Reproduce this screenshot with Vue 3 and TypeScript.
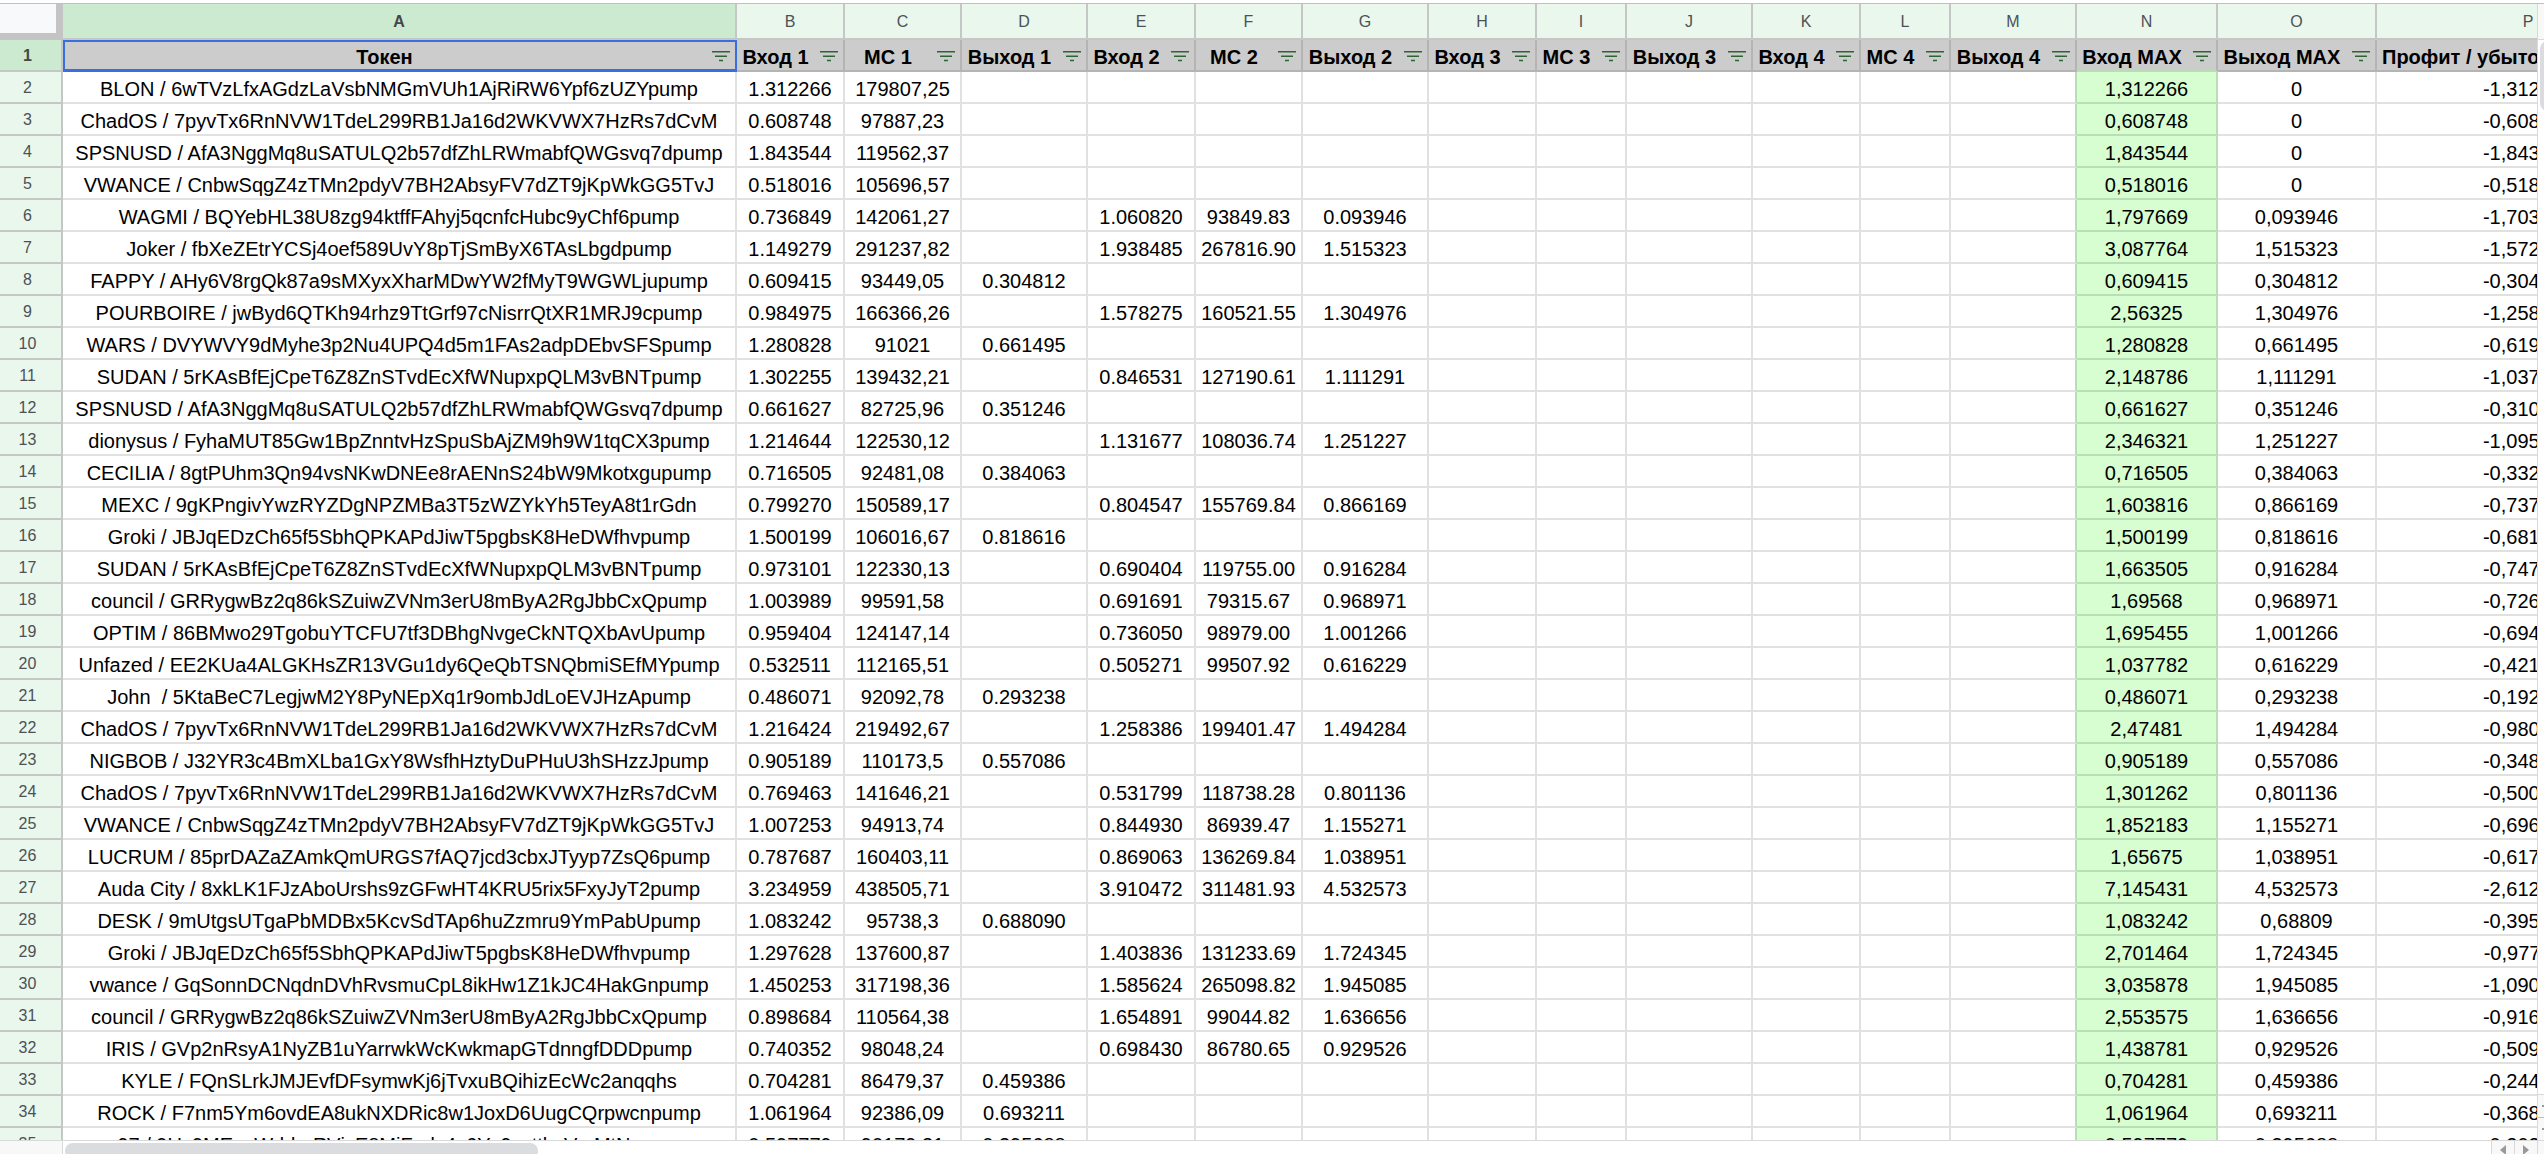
<script setup lang="ts">
interface Column {
  letter: string
  title: string
  width: number
}

interface Row {
  number: number
  cells: string[]
}

const columns: Column[] = [
  { letter: 'A', title: 'Токен', width: 674 },
  { letter: 'B', title: 'Вход 1', width: 108 },
  { letter: 'C', title: 'МС 1', width: 117 },
  { letter: 'D', title: 'Выход 1', width: 126 },
  { letter: 'E', title: 'Вход 2', width: 108 },
  { letter: 'F', title: 'МС 2', width: 107 },
  { letter: 'G', title: 'Выход 2', width: 126 },
  { letter: 'H', title: 'Вход 3', width: 108 },
  { letter: 'I', title: 'МС 3', width: 90 },
  { letter: 'J', title: 'Выход 3', width: 126 },
  { letter: 'K', title: 'Вход 4', width: 108 },
  { letter: 'L', title: 'МС 4', width: 90 },
  { letter: 'M', title: 'Выход 4', width: 126 },
  { letter: 'N', title: 'Вход MAX', width: 141 },
  { letter: 'O', title: 'Выход MAX', width: 159 },
  { letter: 'P', title: 'Профит / убыток', width: 304 },
]

// Fields: token | B | C | D | E | F | G | N | O
const source: string[] = [
  'BLON / 6wTVzLfxAGdzLaVsbNMGmVUh1AjRiRW6Ypf6zUZYpump|1.312266|179807,25|||||1,312266|0',
  'ChadOS / 7pyvTx6RnNVW1TdeL299RB1Ja16d2WKVWX7HzRs7dCvM|0.608748|97887,23|||||0,608748|0',
  'SPSNUSD / AfA3NggMq8uSATULQ2b57dfZhLRWmabfQWGsvq7dpump|1.843544|119562,37|||||1,843544|0',
  'VWANCE / CnbwSqgZ4zTMn2pdyV7BH2AbsyFV7dZT9jKpWkGG5TvJ|0.518016|105696,57|||||0,518016|0',
  'WAGMI / BQYebHL38U8zg94ktffFAhyj5qcnfcHubc9yChf6pump|0.736849|142061,27||1.060820|93849.83|0.093946|1,797669|0,093946',
  'Joker / fbXeZEtrYCSj4oef589UvY8pTjSmByX6TAsLbgdpump|1.149279|291237,82||1.938485|267816.90|1.515323|3,087764|1,515323',
  'FAPPY / AHy6V8rgQk87a9sMXyxXharMDwYW2fMyT9WGWLjupump|0.609415|93449,05|0.304812||||0,609415|0,304812',
  'POURBOIRE / jwByd6QTKh94rhz9TtGrf97cNisrrQtXR1MRJ9cpump|0.984975|166366,26||1.578275|160521.55|1.304976|2,56325|1,304976',
  'WARS / DVYWVY9dMyhe3p2Nu4UPQ4d5m1FAs2adpDEbvSFSpump|1.280828|91021|0.661495||||1,280828|0,661495',
  'SUDAN / 5rKAsBfEjCpeT6Z8ZnSTvdEcXfWNupxpQLM3vBNTpump|1.302255|139432,21||0.846531|127190.61|1.111291|2,148786|1,111291',
  'SPSNUSD / AfA3NggMq8uSATULQ2b57dfZhLRWmabfQWGsvq7dpump|0.661627|82725,96|0.351246||||0,661627|0,351246',
  'dionysus / FyhaMUT85Gw1BpZnntvHzSpuSbAjZM9h9W1tqCX3pump|1.214644|122530,12||1.131677|108036.74|1.251227|2,346321|1,251227',
  'CECILIA / 8gtPUhm3Qn94vsNKwDNEe8rAENnS24bW9Mkotxgupump|0.716505|92481,08|0.384063||||0,716505|0,384063',
  'MEXC / 9gKPngivYwzRYZDgNPZMBa3T5zWZYkYh5TeyA8t1rGdn|0.799270|150589,17||0.804547|155769.84|0.866169|1,603816|0,866169',
  'Groki / JBJqEDzCh65f5SbhQPKAPdJiwT5pgbsK8HeDWfhvpump|1.500199|106016,67|0.818616||||1,500199|0,818616',
  'SUDAN / 5rKAsBfEjCpeT6Z8ZnSTvdEcXfWNupxpQLM3vBNTpump|0.973101|122330,13||0.690404|119755.00|0.916284|1,663505|0,916284',
  'council / GRRygwBz2q86kSZuiwZVNm3erU8mByA2RgJbbCxQpump|1.003989|99591,58||0.691691|79315.67|0.968971|1,69568|0,968971',
  'OPTIM / 86BMwo29TgobuYTCFU7tf3DBhgNvgeCkNTQXbAvUpump|0.959404|124147,14||0.736050|98979.00|1.001266|1,695455|1,001266',
  'Unfazed / EE2KUa4ALGKHsZR13VGu1dy6QeQbTSNQbmiSEfMYpump|0.532511|112165,51||0.505271|99507.92|0.616229|1,037782|0,616229',
  'John  / 5KtaBeC7LegjwM2Y8PyNEpXq1r9ombJdLoEVJHzApump|0.486071|92092,78|0.293238||||0,486071|0,293238',
  'ChadOS / 7pyvTx6RnNVW1TdeL299RB1Ja16d2WKVWX7HzRs7dCvM|1.216424|219492,67||1.258386|199401.47|1.494284|2,47481|1,494284',
  'NIGBOB / J32YR3c4BmXLba1GxY8WsfhHztyDuPHuU3hSHzzJpump|0.905189|110173,5|0.557086||||0,905189|0,557086',
  'ChadOS / 7pyvTx6RnNVW1TdeL299RB1Ja16d2WKVWX7HzRs7dCvM|0.769463|141646,21||0.531799|118738.28|0.801136|1,301262|0,801136',
  'VWANCE / CnbwSqgZ4zTMn2pdyV7BH2AbsyFV7dZT9jKpWkGG5TvJ|1.007253|94913,74||0.844930|86939.47|1.155271|1,852183|1,155271',
  'LUCRUM / 85prDAZaZAmkQmURGS7fAQ7jcd3cbxJTyyp7ZsQ6pump|0.787687|160403,11||0.869063|136269.84|1.038951|1,65675|1,038951',
  'Auda City / 8xkLK1FJzAboUrshs9zGFwHT4KRU5rix5FxyJyT2pump|3.234959|438505,71||3.910472|311481.93|4.532573|7,145431|4,532573',
  'DESK / 9mUtgsUTgaPbMDBx5KcvSdTAp6huZzmru9YmPabUpump|1.083242|95738,3|0.688090||||1,083242|0,68809',
  'Groki / JBJqEDzCh65f5SbhQPKAPdJiwT5pgbsK8HeDWfhvpump|1.297628|137600,87||1.403836|131233.69|1.724345|2,701464|1,724345',
  'vwance / GqSonnDCNqdnDVhRvsmuCpL8ikHw1Z1kJC4HakGnpump|1.450253|317198,36||1.585624|265098.82|1.945085|3,035878|1,945085',
  'council / GRRygwBz2q86kSZuiwZVNm3erU8mByA2RgJbbCxQpump|0.898684|110564,38||1.654891|99044.82|1.636656|2,553575|1,636656',
  'IRIS / GVp2nRsyA1NyZB1uYarrwkWcKwkmapGTdnngfDDDpump|0.740352|98048,24||0.698430|86780.65|0.929526|1,438781|0,929526',
  'KYLE / FQnSLrkJMJEvfDFsymwKj6jTvxuBQihizEcWc2anqqhs|0.704281|86479,37|0.459386||||0,704281|0,459386',
  'ROCK / F7nm5Ym6ovdEA8ukNXDRic8w1JoxD6UugCQrpwcnpump|1.061964|92386,09|0.693211||||1,061964|0,693211',
  '97 / 9Us9MEqsWddnrRVjzE8MjFods4c6Ys9csttbcVmMtNpump|0.597779|90179,31|0.395688||||0,597779|0,395688',
]

const toNumber = (value: string): number => Number(value.replace(',', '.'))

function profit(spent: string, received: string): string {
  return (toNumber(received) - toNumber(spent)).toFixed(6).replace('.', ',')
}

const rows: Row[] = source.map((line, index) => {
  const [token, b, c, d, e, f, g, n, o] = line.split('|')
  return {
    number: index + 2,
    cells: [token, b, c, d, e, f, g, '', '', '', '', '', '', n, o, profit(n, o)],
  }
})
</script>

<template>
  <main class="sheet">
    <div class="body">
      <div class="viewport">
        <table class="grid">
          <colgroup>
            <col class="number-col" />
            <col v-for="column in columns" :key="column.letter" :style="{ width: column.width + 'px' }" />
          </colgroup>
          <thead>
            <tr>
              <td class="corner"></td>
              <th
                v-for="column in columns"
                :key="column.letter"
                scope="col"
                class="letter"
                :class="{ active: column.letter === 'A' }"
              >{{ column.letter }}</th>
            </tr>
          </thead>
          <tbody>
            <tr>
              <th scope="row" class="number active">1</th>
              <td
                v-for="column in columns"
                :key="column.letter"
                class="title"
                :class="{ selected: column.letter === 'A', 'above-total': column.letter === 'N', cut: column.letter === 'P' }"
              >
                <div class="title-inner">
                  <span class="title-text">{{ column.title }}</span>
                  <button class="filter" type="button" :aria-label="'Фильтр: ' + column.title">
                    <svg width="18" height="14" viewBox="0 0 18 14" aria-hidden="true">
                      <path d="M0 3.7h18M3 8.2h12M7 12.6h4" />
                    </svg>
                  </button>
                </div>
              </td>
            </tr>
            <tr v-for="row in rows" :key="row.number">
              <th scope="row" class="number">{{ row.number }}</th>
              <td
                v-for="(cell, index) in row.cells"
                :key="index"
                class="cell"
                :class="{ total: index === 13, 'before-total': index === 12 }"
              >{{ cell }}</td>
            </tr>
          </tbody>
        </table>
      </div>
      <div class="v-rail">
        <div class="v-top"></div>
        <div class="v-track"><div class="v-thumb"></div></div>
        <div class="v-step up"></div>
        <div class="v-step down"></div>
      </div>
    </div>
    <div class="h-rail">
      <div class="h-start"></div>
      <div class="h-track"><div class="h-thumb"></div></div>
      <button class="h-step" type="button" aria-label="Прокрутить влево">
        <svg width="6" height="10" viewBox="0 0 6 10" aria-hidden="true"><path d="M6 0v10L0 5z" /></svg>
      </button>
      <button class="h-step" type="button" aria-label="Прокрутить вправо">
        <svg width="6" height="10" viewBox="0 0 6 10" aria-hidden="true"><path d="M0 0v10l6-5z" /></svg>
      </button>
      <div class="h-end"></div>
    </div>
  </main>
</template>

<style>
body {
  background: #ffffff;
  overflow: hidden;
}
</style>

<style scoped>
.sheet {
  display: flex;
  flex-direction: column;
  height: 100vh;
  box-sizing: border-box;
  padding-top: 3px;
  overflow: hidden;
  font-family: "Liberation Sans", Arial, sans-serif;
  color: #000000;
}

.body {
  display: flex;
  flex: 1;
  min-height: 0;
  border-top: 1px solid #c0c0c0;
}

.viewport {
  flex: 1;
  min-width: 0;
  overflow: hidden;
}

.grid {
  width: 2681px;
  table-layout: fixed;
  border-collapse: separate;
  border-spacing: 0;
}

.number-col {
  width: 63px;
}

.grid th,
.grid td {
  box-sizing: border-box;
  padding: 0;
  text-align: center;
  white-space: pre;
}

.grid .corner {
  height: 36px;
  background: #f8f9fa;
  border-right: 7px solid #c4c4c4;
  border-bottom: 7px solid #c4c4c4;
}

.grid .letter,
.grid .number {
  background: #e9f7ed;
  border-right: 2px solid #c4c7c5;
  border-bottom: 2px solid #c4c7c5;
  color: #4d5156;
  font-size: 16px;
  font-weight: 400;
}

.grid .letter {
  height: 36px;
  padding-top: 2px;
  line-height: 32px;
}

.grid .number {
  height: 32px;
  padding: 2px 6px 0 0;
  line-height: 28px;
}

.grid .letter.active,
.grid .number.active {
  background: #cbead0;
  color: #444746;
  font-weight: 700;
}

.grid .title {
  position: relative;
  height: 32px;
  background: #cccccc;
  border-right: 2px solid #b4b4b4;
  border-bottom: 2px solid #b4b4b4;
}

.grid .above-total {
  border-bottom-color: #b9ddb4;
}

.selected::after {
  content: "";
  position: absolute;
  inset: 0 -2px -2px 0;
  border: 2px solid #376fe0;
  border-bottom-width: 3px;
  pointer-events: none;
}

.title-inner {
  display: flex;
  align-items: center;
  height: 30px;
}

.title-text {
  flex: 1;
  padding-top: 4px;
  font-size: 20px;
  font-weight: 700;
  line-height: 26px;
}

.cut .title-text {
  padding-left: 5px;
  text-align: left;
}

.filter {
  display: flex;
  padding: 0 5px 0 6px;
  border: 0;
  background: none;
}

.filter path {
  fill: none;
  stroke: #2c6534;
  stroke-width: 1.5;
}

.grid .cell {
  height: 32px;
  padding-top: 4px;
  border-right: 2px solid #e1e1e1;
  border-bottom: 2px solid #e1e1e1;
  font-size: 20px;
  line-height: 26px;
}

.grid .before-total {
  border-right-color: #b9ddb4;
}

.grid .total {
  background: #d6fed0;
  border-color: #b9ddb4;
}

.v-rail {
  display: flex;
  flex-direction: column;
  width: 6px;
  border-left: 1px solid #d9d9d9;
  overflow: hidden;
}

.v-top {
  height: 35px;
  background: #f8f8f8;
  border-bottom: 1px solid #d9d9d9;
}

.v-track {
  flex: 1;
}

.v-thumb {
  width: 16px;
  height: 70px;
  margin: 1px 0 0 2px;
  border-radius: 8px;
  background: #dadce0;
}

.v-step {
  display: flex;
  align-items: center;
  justify-content: flex-end;
  height: 22px;
  background: #f8f8f8;
  border-top: 1px solid #d9d9d9;
}

.v-step::after {
  content: "";
  width: 2px;
  height: 2px;
  background: #999999;
}

.v-step.down {
  border-top-color: #a9bff5;
}

.h-rail {
  display: flex;
  height: 13px;
  border-top: 1px solid #d9d9d9;
  overflow: hidden;
}

.h-start {
  width: 62px;
  background: #f8f8f8;
  border-right: 1px solid #d9d9d9;
}

.h-track {
  flex: 1;
  padding: 2px;
}

.h-thumb {
  width: 19.5%;
  height: 16px;
  border-radius: 8px;
  background: #dadce0;
}

.h-step {
  display: flex;
  justify-content: center;
  width: 23px;
  padding: 4px 0 0;
  background: #f8f8f8;
  border: 0;
  border-left: 1px solid #d9d9d9;
}

.h-step path {
  fill: #999999;
}

.h-end {
  width: 6px;
  background: #f8f8f8;
  border-left: 1px solid #d9d9d9;
}
</style>
